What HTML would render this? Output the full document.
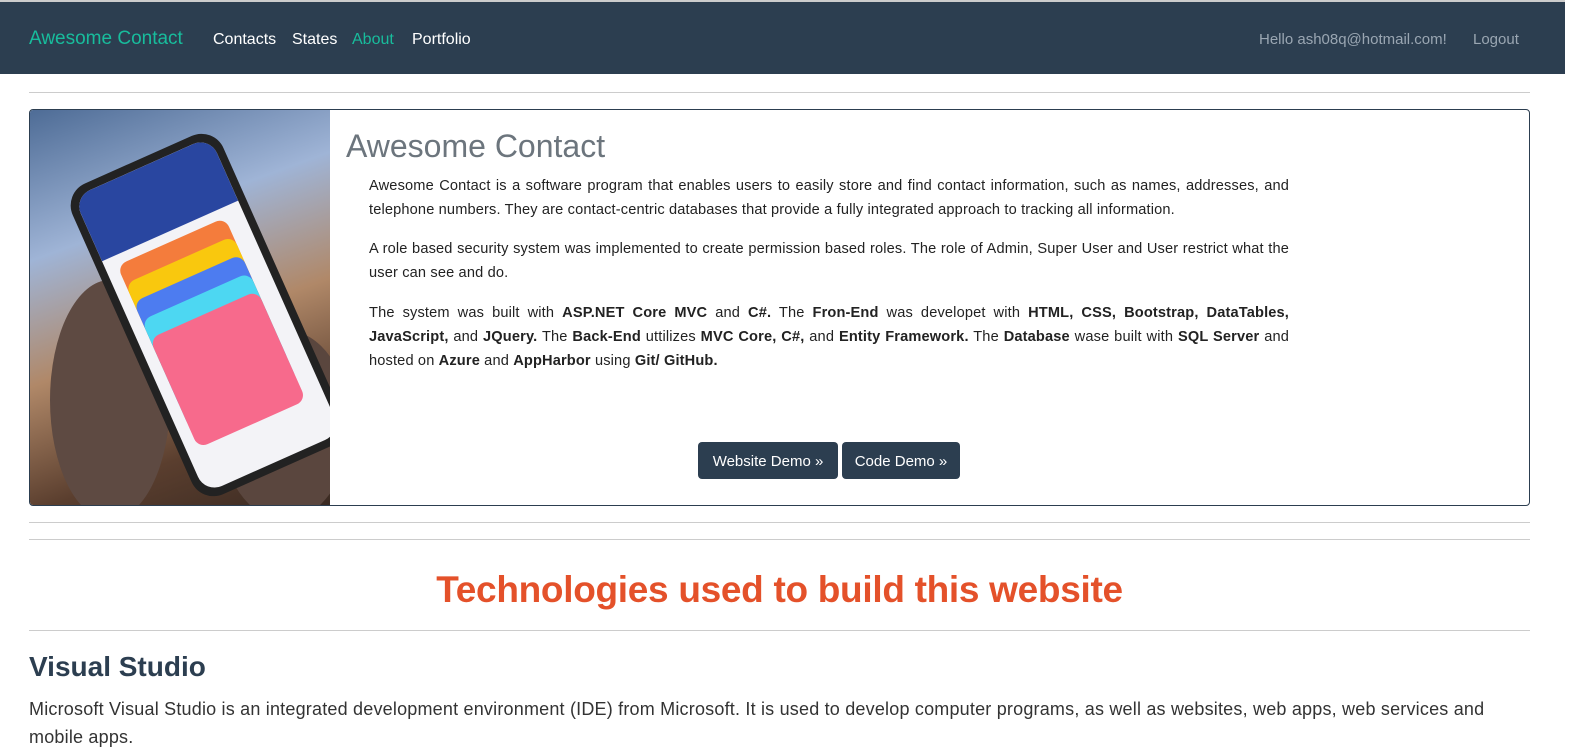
<!DOCTYPE html>
<html><head><meta charset="utf-8"><style>
body{margin:0;font-family:"Liberation Sans",sans-serif;background:#fff;color:#212529;width:1569px;height:747px;overflow:hidden;position:relative}
.nav{position:absolute;left:0;top:0;width:1565px;height:74px;background:#2c3e50;border-top:2px solid #ccc;box-sizing:border-box}
.nav span{position:absolute;top:29px;font-size:16px;color:#fff}
hr{position:absolute;left:29px;width:1501px;border:0;border-top:1px solid #ccc;margin:0}
.card{position:absolute;left:29px;top:109px;width:1499px;height:395px;border:1px solid #2c3e50;border-radius:4px;overflow:hidden}
.img{position:absolute;left:0;top:0;width:300px;height:395px;overflow:hidden;background:linear-gradient(160deg,#4e6c96 0%,#9fb4d6 30%,#b08868 55%,#5a3e2e 80%,#3a2a22 100%)}
.hand{position:absolute;border-radius:50%;background:#6b5248}
.phone{position:absolute;left:95px;top:35px;width:165px;height:340px;background:#222;border-radius:24px;transform:rotate(-24deg)}
.screen{position:absolute;left:8px;top:8px;right:8px;bottom:8px;background:#f3f3f7;border-radius:18px;overflow:hidden}
.screen .top{height:70px;background:#2946a0}
.c{position:absolute;left:12px;width:118px;height:120px;border-radius:10px}
p.t{position:absolute;left:369px;width:920px;margin:0;font-size:14.6px;letter-spacing:0.15px;line-height:24px;text-align:justify;color:#222}
.btn{position:absolute;top:442px;height:37px;background:#2c3e50;color:#fff;border-radius:4px;font-size:15px;line-height:40px;text-align:center}
</style></head><body>
<div class="nav">
<span style="left:29px;top:26px;font-size:19px;color:#18bc9c">Awesome Contact</span>
<span style="left:213px">Contacts</span><span style="left:292px">States</span><span style="left:352px;color:#18bc9c">About</span><span style="left:412px">Portfolio</span>
<span style="left:1259px;color:#9aa6b2;font-size:15px">Hello ash08q@hotmail.com!</span><span style="left:1473px;color:#9aa6b2;font-size:15px">Logout</span>
</div>
<hr style="top:92px">
<div class="card">
<div class="img">
<div class="hand" style="left:20px;top:170px;width:120px;height:240px;background:#5e4a42"></div>
<div class="hand" style="left:190px;top:220px;width:130px;height:190px;background:#5a463e"></div>
<div class="phone"><div class="screen"><div class="top"></div>
<div class="c" style="top:80px;background:#f47c3c"></div><div class="c" style="top:100px;background:#f9c80e"></div><div class="c" style="top:120px;background:#4d7cf0"></div><div class="c" style="top:140px;background:#4dd7f2"></div><div class="c" style="top:160px;background:#f76a8c"></div>
</div></div></div>
<div style="position:absolute;left:316px;top:18px;font-size:32px;color:#6c757d">Awesome Contact</div>
</div>
<p class="t" style="top:174px">Awesome Contact is a software program that enables users to easily store and find contact information, such as names, addresses, and telephone numbers. They are contact-centric databases that provide a fully integrated approach to tracking all information.</p>
<p class="t" style="top:237px">A role based security system was implemented to create permission based roles. The role of Admin, Super User and User restrict what the user can see and do.</p>
<p class="t" style="top:301px">The system was built with <b>ASP.NET Core MVC</b> and <b>C#.</b> The <b>Fron-End</b> was developet with <b>HTML, CSS, Bootstrap, DataTables, JavaScript,</b> and <b>JQuery.</b> The <b>Back-End</b> uttilizes <b>MVC Core, C#,</b> and <b>Entity Framework.</b> The <b>Database</b> wase built with <b>SQL Server</b> and hosted on <b>Azure</b> and <b>AppHarbor</b> using <b>Git/ GitHub.</b></p>
<div class="btn" style="left:698px;width:140px">Website Demo »</div>
<div class="btn" style="left:842px;width:118px">Code Demo »</div>
<hr style="top:522px"><hr style="top:539px">
<div style="position:absolute;left:0;width:1559px;top:569px;text-align:center;font-size:37px;color:#e4512a;font-weight:bold;letter-spacing:-0.3px">Technologies used to build this website</div>
<hr style="top:630px">
<div style="position:absolute;left:29px;top:651px;font-size:28px;font-weight:bold;color:#2c3e50">Visual Studio</div>
<div style="position:absolute;left:29px;top:695px;width:1500px;font-size:18px;letter-spacing:0.2px;line-height:28px;color:#333">Microsoft Visual Studio is an integrated development environment (IDE) from Microsoft. It is used to develop computer programs, as well as websites, web apps, web services and mobile apps.</div>
</body></html>
